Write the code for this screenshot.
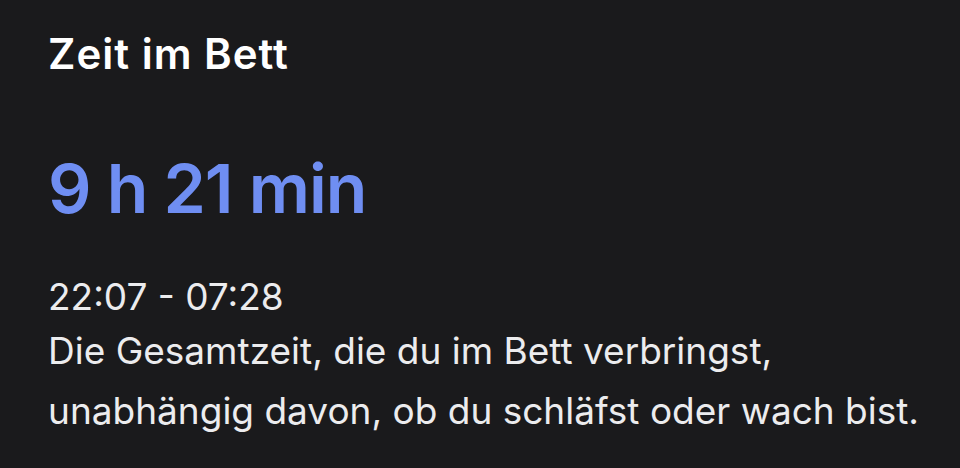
import React from 'react';

const App = () => {
  return (
    <div
      className="w-[960px] h-[468px] bg-[#1a1a1c] pl-[48px] pt-[26px] overflow-hidden"
      style={{ fontFamily: 'Inter, "Noto Sans", sans-serif' }}
    >
      <h1 className="text-[42px] font-semibold text-white leading-[56px] tracking-[1px]">
        Zeit im Bett
      </h1>
      <div className="mt-[66px] text-[68px] font-semibold text-[#6f8ef2] leading-[80px] tracking-[-1px]">
        9 h 21 min
      </div>
      <p className="mt-[45px] text-[37px] text-[#ececee] leading-[48px]">22:07 - 07:28</p>
      <p className="text-[37px] text-[#ececee] leading-[60px] whitespace-nowrap">
        Die Gesamtzeit, die du im Bett verbringst,
        <br />
        unabhängig davon, ob du schläfst oder wach bist.
      </p>
    </div>
  );
};

export default App;
